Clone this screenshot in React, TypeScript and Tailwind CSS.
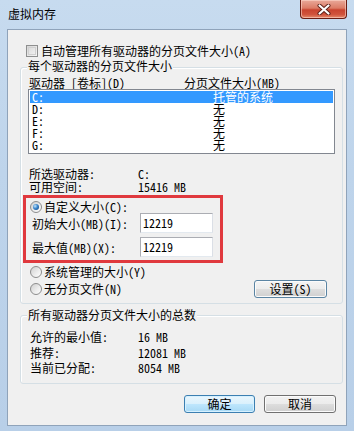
import React from "react";

const font = "font-['Noto_Sans_Mono_CJK_SC','Noto_Sans_CJK_SC',sans-serif]";

function Radio({ checked = false }: { checked?: boolean }) {
  return (
    <span className="flex h-[12px] w-[12px] shrink-0 items-center justify-center rounded-full border border-[#8d8d8d] bg-[linear-gradient(135deg,#cfcfcf_0%,#eeeeee_60%,#ffffff_100%)]">
      {checked && (
        <span className="h-[6px] w-[6px] rounded-full bg-[radial-gradient(circle_at_35%_35%,#c4e6fc_0%,#3b86cc_45%,#0c3d78_100%)]" />
      )}
    </span>
  );
}

function Btn({
  children,
  kind = "normal",
  className = "",
}: {
  children: React.ReactNode;
  kind?: "normal" | "default" | "hover";
  className?: string;
}) {
  const skin =
    kind === "default"
      ? "border-[#3c7fb1] bg-[linear-gradient(#eaf6fd_0%,#d9f0fc_50%,#bee6fd_51%,#a7d9f5_100%)] shadow-[inset_0_0_0_1px_#d6f1ff]"
      : kind === "hover"
      ? "border-[#5a84a3] bg-[linear-gradient(#f4f4f4_0%,#ececec_50%,#dedede_51%,#d0d0d0_100%)] shadow-[inset_0_0_0_1px_#fbfbfb]"
      : "border-[#707070] bg-[linear-gradient(#f2f2f2_0%,#ebebeb_50%,#dddddd_51%,#cfcfcf_100%)] shadow-[inset_0_0_0_1px_#fbfbfb]";
  return (
    <div className={`flex h-[18px] items-center justify-center rounded-[3px] border ${skin} ${className}`}>
      {children}
    </div>
  );
}

function Field({ value }: { value: string }) {
  return (
    <div className="h-[20px] w-[73px] border border-[#abadb3] border-r-[#dbdfe6] border-b-[#e3e9ef] bg-white pl-[2px] leading-[18px]">
      {value}
    </div>
  );
}

const rows: [string, string][] = [
  ["C:", "托管的系统"],
  ["D:", "无"],
  ["E:", "无"],
  ["F:", "无"],
  ["G:", "无"],
];

export default function App() {
  return (
    <div
      className={`${font} relative h-[431px] w-[354px] overflow-hidden bg-[linear-gradient(180deg,#c7dbef_0%,#bed4eb_40%,#b8cfe8_100%)] text-[12px] leading-[12px] text-black`}
    >
      {/* title bar */}
      <div className="flex h-[29px] items-start justify-between">
        <div className="pl-[8px] pt-[8px]">虚拟内存</div>
        <div className="mr-[7px] flex h-[19px] w-[47px] items-center justify-center rounded-b-[4px] border border-t-0 border-[#6a1d14] bg-[linear-gradient(180deg,#e9a99a_0%,#dc7c66_45%,#c9432f_55%,#d0533c_80%,#e58a6b_100%)] shadow-[inset_0_0_0_1px_rgba(255,220,210,0.55)]">
          <svg width="14" height="11" viewBox="0 0 14 11">
            <path d="M2.5 1.5 L11.5 9.5 M11.5 1.5 L2.5 9.5" stroke="#5a1e16" strokeWidth="4" strokeLinecap="round" />
            <path d="M2.5 1.5 L11.5 9.5 M11.5 1.5 L2.5 9.5" stroke="#ffffff" strokeWidth="2.2" strokeLinecap="round" />
          </svg>
        </div>
      </div>

      {/* client area */}
      <div className="ml-[7px] flex h-[397px] w-[340px] flex-col border border-[#8fa3ba] bg-[#f0f0f0]">
        {/* auto manage checkbox */}
        <div className="mt-[15px] ml-[18px] flex h-[12px] items-center gap-[3px]">
          <span className="h-[12px] w-[12px] border border-[#8e8f8f] bg-[linear-gradient(135deg,#d6d6d6_0%,#f6f6f6_100%)] p-[1px]">
            <span className="block h-full w-full border border-[#d0d0d0]" />
          </span>
          <span>自动管理所有驱动器的分页文件大小(A)</span>
        </div>

        {/* group 1 */}
        <div className="mt-[10px] ml-[12px] mr-[3px] flex flex-col rounded-[3px] border border-[#d5dfe5] pb-[5px] shadow-[inset_1px_1px_0_#ffffff]">
          <div className="-mt-[8px] ml-[6px] w-fit bg-[#f0f0f0] px-[1px]">每个驱动器的分页文件大小</div>

          <div className="mt-[5px] flex pl-[8px]">
            <span className="w-[155px]">驱动器 [卷标](D)</span>
            <span>分页文件大小(MB)</span>
          </div>

          <div className="mx-[7px] h-[65px] border border-[#828790] bg-white p-[1px]">
            {rows.map(([d, s], i) => (
              <div
                key={d}
                className={`flex h-[12px] ${i === 0 ? "bg-[#3399ff] text-white" : ""}`}
              >
                <span className="w-[183px] pl-[2px]">{d}</span>
                <span>{s}</span>
              </div>
            ))}
          </div>

          <div className="mt-[14px] flex pl-[8px]">
            <span className="w-[109px]">所选驱动器:</span>
            <span>C:</span>
          </div>
          <div className="mt-[1px] flex pl-[8px]">
            <span className="w-[109px]">可用空间:</span>
            <span>15416 MB</span>
          </div>

          {/* highlighted custom size block */}
          <div className="mt-[2px] ml-[2px] flex h-[68px] w-[200px] flex-col border-[3px] border-[#e0393e] pt-[3px]">
            <div className="ml-[4px] flex h-[12px] items-center gap-[2px]">
              <Radio checked />
              <span>自定义大小(C):</span>
            </div>
            <div className="ml-[6px] flex items-center">
              <span className="w-[108px] pt-[2px]">初始大小(MB)(I):</span>
              <Field value="12219" />
            </div>
            <div className="mt-[4px] ml-[6px] flex items-center">
              <span className="w-[108px] pt-[2px]">最大值(MB)(X):</span>
              <Field value="12219" />
            </div>
          </div>

          <div className="mt-[3px] ml-[9px] flex h-[12px] items-center gap-[2px]">
            <Radio />
            <span>系统管理的大小(Y)</span>
          </div>
          <div className="mt-[1px] flex h-[19px] items-center justify-between pl-[9px] pr-[15px]">
            <div className="flex items-center gap-[2px]">
              <Radio />
              <span>无分页文件(N)</span>
            </div>
            <Btn kind="hover" className="w-[73px]">设置(S)</Btn>
          </div>
        </div>

        {/* group 2 */}
        <div className="mt-[11px] ml-[12px] mr-[3px] flex flex-col rounded-[3px] border border-[#d5dfe5] pb-[9px] shadow-[inset_1px_1px_0_#ffffff]">
          <div className="-mt-[7px] ml-[6px] w-fit bg-[#f0f0f0] px-[1px]">所有驱动器分页文件大小的总数</div>
          <div className="mt-[10px] flex pl-[9px]">
            <span className="w-[108px]">允许的最小值:</span>
            <span>16 MB</span>
          </div>
          <div className="mt-[4px] flex pl-[9px]">
            <span className="w-[108px]">推荐:</span>
            <span>12081 MB</span>
          </div>
          <div className="mt-[3px] flex pl-[9px]">
            <span className="w-[108px]">当前已分配:</span>
            <span>8054 MB</span>
          </div>
        </div>

        {/* dialog buttons */}
        <div className="mt-[11px] mr-[10px] flex justify-end gap-[9px]">
          <Btn kind="default" className="w-[71px]">确定</Btn>
          <Btn className="w-[72px]">取消</Btn>
        </div>
      </div>
    </div>
  );
}
